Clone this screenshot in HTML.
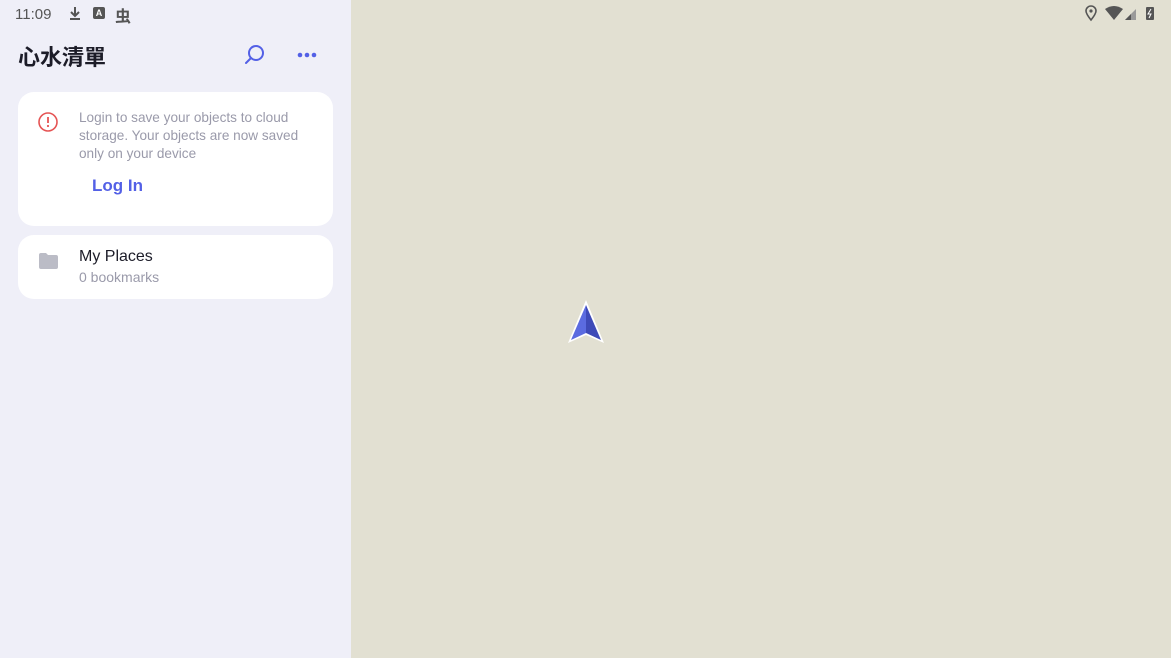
<!DOCTYPE html>
<html><head><meta charset="utf-8"><style>
*{margin:0;padding:0;box-sizing:border-box}
body{width:1171px;height:658px;overflow:hidden;background:#e2e0d2;font-family:"Liberation Sans","Noto Sans CJK TC",sans-serif;position:relative}
.side{position:absolute;left:0;top:0;width:351px;height:658px;background:#efeff8}
.abs{position:absolute}
.card{position:absolute;left:18px;width:315px;background:#fff;border-radius:16px}
</style></head><body>
<div class="side">
<div class="abs" style="left:15px;top:6px;font-size:15px;color:#555">11:09</div>
<svg class="abs" style="left:68px;top:6px" width="14" height="15"><path d="M7 1v9M3 6l4 4 4-4M2 13h10" stroke="#555" stroke-width="2" fill="none"/></svg>
<div class="abs" style="left:93px;top:7px;width:12px;height:12px;background:#555;border-radius:2px;color:#fff;font-size:9px;text-align:center;line-height:12px;font-weight:bold">A</div>
<div class="abs" style="left:115px;top:3px;font-size:16px;color:#555;font-weight:bold">虫</div>
<div class="abs" style="left:18px;top:40px;font-size:22px;font-weight:bold;color:#1c1c28">心水清單</div>
<svg class="abs" style="left:243px;top:43px" width="24" height="24"><circle cx="13" cy="10" r="7" stroke="#5360e6" stroke-width="2" fill="none"/><path d="M8 15l-5 5" stroke="#5360e6" stroke-width="2" stroke-linecap="round"/></svg>
<svg class="abs" style="left:297px;top:50px" width="22" height="10"><circle cx="3" cy="5" r="2.3" fill="#5360e6"/><circle cx="10" cy="5" r="2.3" fill="#5360e6"/><circle cx="17" cy="5" r="2.3" fill="#5360e6"/></svg>
<div class="card" style="top:92px;height:134px">
<svg class="abs" style="left:20px;top:20px" width="20" height="20"><circle cx="10" cy="10" r="9" stroke="#e55454" stroke-width="1.6" fill="none"/><path d="M10 5v6" stroke="#e55454" stroke-width="1.8"/><circle cx="10" cy="14" r="1.1" fill="#e55454"/></svg>
<div class="abs" style="left:61px;top:17px;width:245px;font-size:13.6px;line-height:18px;color:#9a9aaa">Login to save your objects to cloud storage. Your objects are now saved only on your device</div>
<div class="abs" style="left:74px;top:84px;font-size:17px;font-weight:bold;color:#5360e6">Log In</div>
</div>
<div class="card" style="top:235px;height:64px">
<svg class="abs" style="left:20px;top:17px" width="21" height="18"><path d="M1 3q0-2 2-2h5l2 2h8q2 0 2 2v10q0 2-2 2H3q-2 0-2-2z" fill="#bbbcc6"/></svg>
<div class="abs" style="left:61px;top:13px;font-size:16px;color:#1c1c28">My Places</div>
<div class="abs" style="left:61px;top:34px;font-size:14px;color:#9a9aaa">0 bookmarks</div>
</div>
</div>
<svg class="abs" style="left:1085px;top:5px" width="80" height="17"><path d="M6 15C2 10 1 8 1 6a5 5 0 0110 0c0 2-1 4-5 9z" stroke="#555" stroke-width="1.6" fill="none"/><circle cx="6" cy="6" r="1.6" fill="#555"/><path d="M20 4q9-6 18 0l-9 11z" fill="#555"/><path d="M40 15l11-11v11z" fill="#999"/><path d="M40 15l6-6v6z" fill="#555"/><rect x="61" y="2" width="8" height="13" rx="1" fill="#555"/><path d="M66 4l-3 5h3l-2 4" stroke="#fff" stroke-width="1" fill="none"/></svg>
<svg class="abs" style="left:565px;top:298px" width="42" height="48"><path d="M21 2L3 45l18-8 18 8z" fill="#fff"/><path d="M21 7L6 42l15-7z" fill="#5b6be0"/><path d="M21 7l15 35-15-7z" fill="#3e4ab8"/></svg>
</body></html>
